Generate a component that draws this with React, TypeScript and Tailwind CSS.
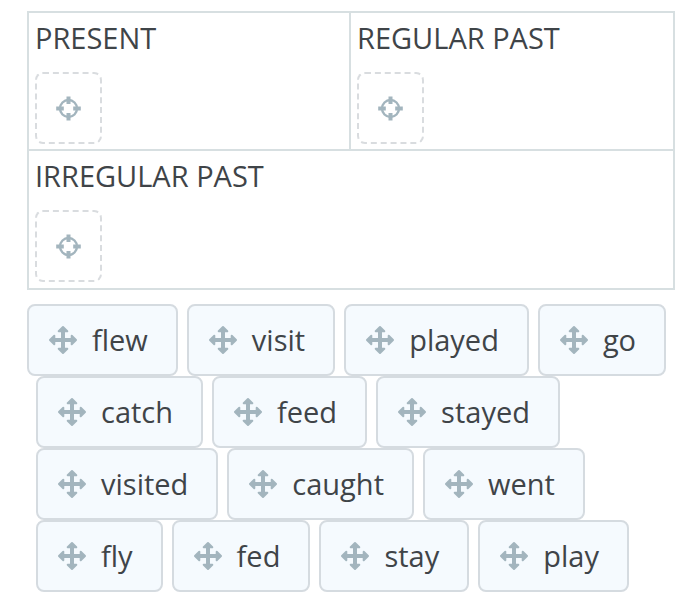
import React from "react";

const words = [
  "flew", "visit", "played", "go",
  "catch", "feed", "stayed",
  "visited", "caught", "went",
  "fly", "fed", "stay", "play",
];

function TargetIcon() {
  return (
    <svg viewBox="0 0 25 25" className="size-[25px]" fill="none" stroke="#a3b5be" aria-hidden="true">
      <circle cx="12.500" cy="12.500" r="8.500" strokeWidth="2.400" />
      <path d="M12.500 0.500v7.500M12.500 17v7.500M0.200 12.500h7.600M17.200 12.500h7.600" strokeWidth="4" />
    </svg>
  );
}

function MoveIcon() {
  return (
    <svg
      viewBox="0 0 30 30"
      className="size-[30px] shrink-0"
      fill="#a3b5be"
      stroke="#a3b5be"
      strokeLinejoin="round"
      aria-hidden="true"
    >
      <path d="M15 4v22M4 15h22" strokeWidth="4" />
      <path
        strokeWidth="2"
        d="M15 2 19.300 6.300H10.700ZM15 28 10.700 23.700H19.300ZM2 15 6.300 10.700V19.300ZM28 15 23.700 19.300V10.700Z"
      />
    </svg>
  );
}

function DropCell({ title, className }: { title: string; className: string }) {
  return (
    <section className={`px-1.5 pt-1.5 ${className}`}>
      <h2 className="text-[29px] leading-[38px]">{title}</h2>
      <button
        type="button"
        aria-label={`Drop a word in ${title}`}
        className="mt-[15px] flex h-[72px] w-[67px] items-center justify-center rounded-lg border-2 border-dashed border-[#d9dcdf]"
      >
        <TargetIcon />
      </button>
    </section>
  );
}

function WordChip({ word }: { word: string }) {
  return (
    <li className="ml-[9px] first:ml-0">
      <button
        type="button"
        className="flex h-[72px] cursor-move items-center gap-3.5 rounded-lg border-2 border-[#d5dbe0] bg-[#f5fafe] pr-7 pl-[19px] text-[29px] leading-10"
      >
        <MoveIcon />
        <span>{word}</span>
      </button>
    </li>
  );
}

export default function App() {
  return (
    <main className="min-h-screen bg-white pt-[11px] pr-[18px] pb-2.5 pl-[27px] font-['Open_Sans',sans-serif] text-[#3f4448]">
      <div className="grid grid-cols-2 border-2 border-[#d7dfe1]">
        <DropCell title="PRESENT" className="border-r-2 border-b-2 border-[#d7dfe1] pb-[5px]" />
        <DropCell title="REGULAR PAST" className="border-b-2 border-[#d7dfe1] pb-[5px]" />
        <DropCell title="IRREGULAR PAST" className="col-span-2 pb-1.5" />
      </div>
      <ul className="mt-3.5 flex flex-wrap">
        {words.map((word) => (
          <WordChip key={word} word={word} />
        ))}
      </ul>
    </main>
  );
}
